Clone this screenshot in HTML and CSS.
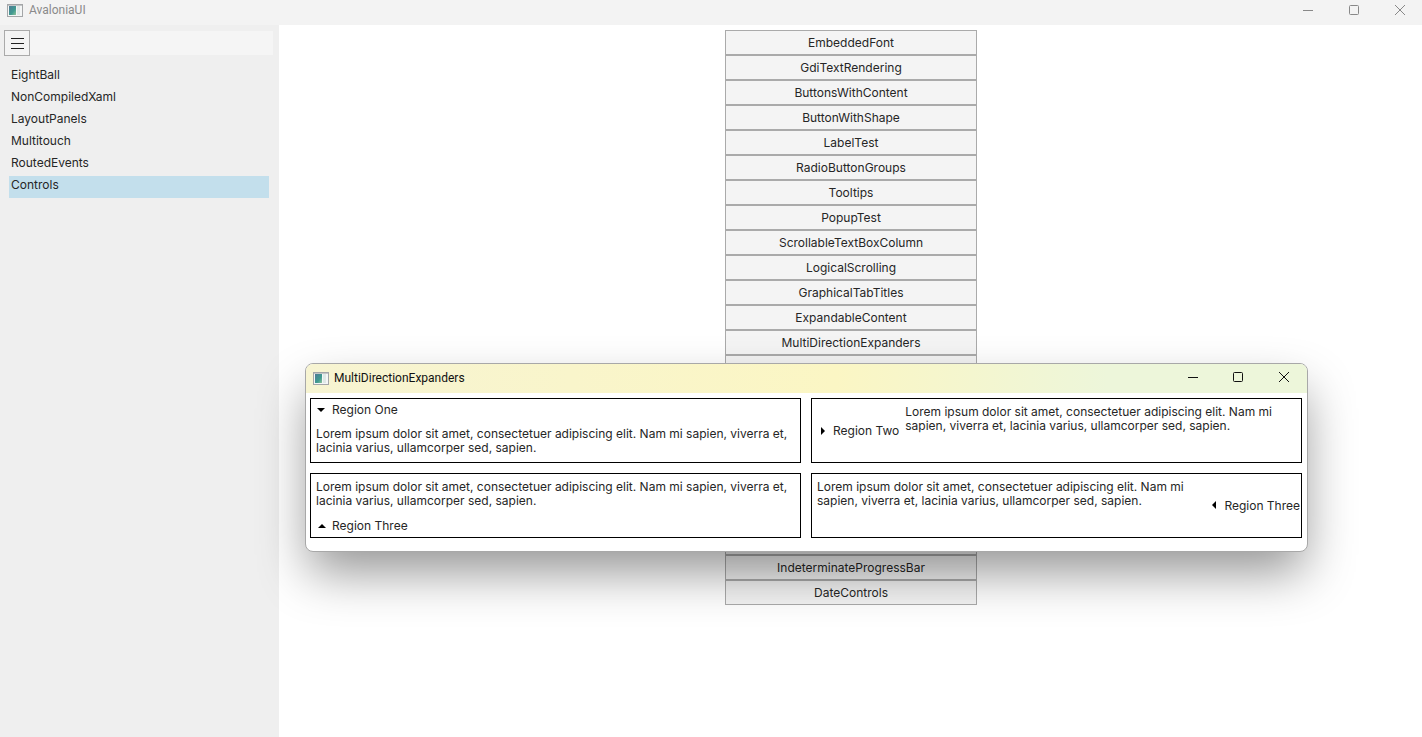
FILE: index.html
```html
<!DOCTYPE html>
<html lang="en">
<head>
<meta charset="utf-8">
<title>AvaloniaUI</title>
<link rel="stylesheet" href="styles.css">
</head>
<body>
<header class="titlebar">
  <svg class="appicon" viewBox="0 0 16 16"><defs><linearGradient id="lg" x1="0" y1="0" x2="1" y2="1"><stop offset="0" stop-color="#4f7a96"/><stop offset=".6" stop-color="#3f9a90"/><stop offset="1" stop-color="#8fc49a"/></linearGradient></defs><rect x="0.5" y="2.5" width="15" height="12" fill="#f4f6f6" stroke="#a4a6a8"/><rect x="1" y="3" width="14" height="1" fill="#c4c6c8"/><rect x="2" y="4" width="7" height="9" fill="url(#lg)"/><rect x="10" y="4" width="3" height="9" fill="#dfe8e6"/></svg>
  <span class="titlebar-text">AvaloniaUI</span>
  <div class="caption caption-main">
    <svg viewBox="0 0 12 12" class="cap"><path d="M1 6.5h10" /></svg>
    <svg viewBox="0 0 12 12" class="cap"><rect x="1.5" y="1.5" width="9" height="9" rx="1"/></svg>
    <svg viewBox="0 0 12 12" class="cap"><path d="M1 1l10 10M11 1L1 11"/></svg>
  </div>
</header>
<div class="app">
  <aside class="sidebar">
    <div class="searchrow">
      <button class="burger"><svg viewBox="0 0 13 11" class="burger-icon"><path d="M0 .5h13M0 5.5h13M0 10.5h13"/></svg></button>
      <div class="searchfield"></div>
    </div>
    <ul class="navlist">
      <li class="navitem">EightBall</li>
      <li class="navitem">NonCompiledXaml</li>
      <li class="navitem">LayoutPanels</li>
      <li class="navitem">Multitouch</li>
      <li class="navitem">RoutedEvents</li>
      <li class="navitem selected">Controls</li>
    </ul>
  </aside>
  <main class="content">
    <div class="buttons">
      <button class="demo">EmbeddedFont</button>
      <button class="demo">GdiTextRendering</button>
      <button class="demo">ButtonsWithContent</button>
      <button class="demo">ButtonWithShape</button>
      <button class="demo">LabelTest</button>
      <button class="demo">RadioButtonGroups</button>
      <button class="demo">Tooltips</button>
      <button class="demo">PopupTest</button>
      <button class="demo">ScrollableTextBoxColumn</button>
      <button class="demo">LogicalScrolling</button>
      <button class="demo">GraphicalTabTitles</button>
      <button class="demo">ExpandableContent</button>
      <button class="demo">MultiDirectionExpanders</button>
      <button class="demo"></button>
      <button class="demo"></button>
      <button class="demo"></button>
      <button class="demo"></button>
      <button class="demo"></button>
      <button class="demo"></button>
      <button class="demo"></button>
      <button class="demo"></button>
      <button class="demo">IndeterminateProgressBar</button>
      <button class="demo">DateControls</button>
    </div>
  </main>
</div>
<section class="window">
  <header class="win-title">
    <svg class="appicon" viewBox="0 0 16 16"><rect x="0.5" y="2.5" width="15" height="12" fill="#f4f6f6" stroke="#a4a6a8"/><rect x="1" y="3" width="14" height="1" fill="#c4c6c8"/><rect x="2" y="4" width="7" height="9" fill="url(#lg)"/><rect x="10" y="4" width="3" height="9" fill="#dfe8e6"/></svg>
    <span class="win-title-text">MultiDirectionExpanders</span>
    <div class="caption caption-win">
      <svg viewBox="0 0 12 12" class="cap"><path d="M2 6.5h10" /></svg>
      <svg viewBox="0 0 12 12" class="cap"><rect x="1.5" y="1.5" width="9" height="9" rx="1"/></svg>
      <svg viewBox="0 0 12 12" class="cap"><path d="M1 1l10 10M11 1L1 11"/></svg>
    </div>
  </header>
  <div class="win-grid">
    <div class="expander down">
      <div class="exp-head"><svg class="arrow" viewBox="0 0 10 10"><path d="M1 3h8L5 7z"/></svg><span>Region One</span></div>
      <p class="lorem">Lorem ipsum dolor sit amet, consectetuer adipiscing elit. Nam mi sapien, viverra et, lacinia varius, ullamcorper sed, sapien.</p>
    </div>
    <div class="expander right">
      <div class="exp-head"><svg class="arrow" viewBox="0 0 10 10"><path d="M3 1v8l4-4z"/></svg><span>Region Two</span></div>
      <p class="lorem">Lorem ipsum dolor sit amet, consectetuer adipiscing elit. Nam mi sapien, viverra et, lacinia varius, ullamcorper sed, sapien.</p>
    </div>
    <div class="expander up">
      <p class="lorem">Lorem ipsum dolor sit amet, consectetuer adipiscing elit. Nam mi sapien, viverra et, lacinia varius, ullamcorper sed, sapien.</p>
      <div class="exp-head"><svg class="arrow" viewBox="0 0 10 10"><path d="M1 7h8L5 3z"/></svg><span>Region Three</span></div>
    </div>
    <div class="expander left">
      <p class="lorem">Lorem ipsum dolor sit amet, consectetuer adipiscing elit. Nam mi sapien, viverra et, lacinia varius, ullamcorper sed, sapien.</p>
      <div class="exp-head"><svg class="arrow" viewBox="0 0 10 10"><path d="M7 0v8L3 4z"/></svg><span>Region Three</span></div>
    </div>
  </div>
</section>
</body>
</html>
```
FILE: styles.css
```css
* { box-sizing: border-box; }
html, body { height: 100%; }
body {
  margin: 0;
  overflow: hidden;
  display: flex;
  flex-direction: column;
  background: #fff;
  color: #262626;
  font-family: Inter, "Liberation Sans", sans-serif;
  font-size: 12px;
  line-height: 14px;
}
.titlebar {
  height: 25px;
  flex: none;
  display: flex;
  align-items: center;
  padding: 0 0 6px 7px;
  background: #f3f3f3;
  color: #8a8a8a;
}
.appicon { width: 16px; height: 16px; flex: none; }
.titlebar-text { margin-left: 6px; font-family: Roboto, sans-serif; }
.caption { margin-left: auto; display: flex; }
.cap { fill: none; stroke: #888; stroke-width: 1; width: 12px; height: 12px; }
.caption-main { gap: 34px; padding-right: 16px; }
.app { flex: 1; display: flex; min-height: 0; }
.sidebar { width: 279px; flex: none; background: #efefef; padding: 5px 6px 0 4px; }
.searchrow { height: 26px; display: flex; }
.searchfield { flex: 1; margin: 1px 0; background: #f5f5f5; }
.burger {
  width: 26px; height: 26px; padding: 0;
  display: flex; align-items: center; justify-content: center;
  background: #f4f4f4; border: 1px solid #aaa;
}
.burger-icon { width: 13px; height: 11px; fill: none; stroke: #222; stroke-width: 1; }
.navlist { list-style: none; margin: 10px 0 0 5px; padding: 0; width: 260px; }
.navitem { height: 22px; padding: 2px 2px 0; white-space: nowrap; }
.navitem.selected { background: #c3dfec; }
.content { flex: 1; padding: 5px 0 0 1px; display: flex; justify-content: center; }
.buttons { width: 252px; display: flex; flex-direction: column; }
.demo {
  height: 25px;
  padding: 0;
  flex: none;
  background: #f4f4f4;
  border: 1px solid #aaa;
  font: inherit;
  color: inherit;
}
.window {
  position: absolute;
  left: 305px; top: 363px;
  width: 1003px; height: 189px;
  background: #fff;
  border: 1px solid #a8a8a8;
  border-radius: 8px;
  box-shadow: 0 24px 50px -4px rgba(0, 0, 0, .42);
  overflow: hidden;
  display: flex;
  flex-direction: column;
}
.win-title {
  height: 29px;
  flex: none;
  display: flex;
  align-items: center;
  padding: 0 0 2px 7px;
  color: #111;
  background: linear-gradient(90deg, #f7f4d2 0, #fbf6c4 53%, #edf6da 80%, #edf6da 100%);
}
.win-title-text { margin-left: 5px; font-family: Roboto, sans-serif; }
.caption-win { gap: 34px; padding-right: 17px; margin-bottom: 2px; }
.caption-win .cap { stroke: #111; }
.win-grid {
  flex: 1;
  display: grid;
  grid-template-columns: 491px 491px;
  grid-template-rows: 65px 65px;
  gap: 10px;
  padding: 5px 4px;
}
.expander { border: 1px solid #000; display: flex; min-width: 0; }
.expander.down, .expander.up { flex-direction: column; }
.exp-head { display: flex; align-items: center; white-space: nowrap; flex: none; }
.arrow { width: 10px; height: 10px; fill: #000; flex: none; }
.lorem { margin: 0; }
.down { padding: 4px 5px; }
.down .exp-head { height: 14px; gap: 6px; }
.down .lorem { margin-top: 10px; }
.up { padding: 6px 5px 4px; }
.up .exp-head { margin-top: 11px; padding-left: 1px; gap: 5px; }
.right { padding: 6px 0 0 6px; }
.right .exp-head { align-self: flex-start; margin-top: 19px; gap: 5px; }
.right .lorem { margin-left: 6px; width: 385px; }
.left { padding: 6px 1px 0 5px; justify-content: space-between; }
.left .lorem { width: 385px; }
.left .exp-head { align-self: flex-start; margin-top: 19px; gap: 5px; }
```
